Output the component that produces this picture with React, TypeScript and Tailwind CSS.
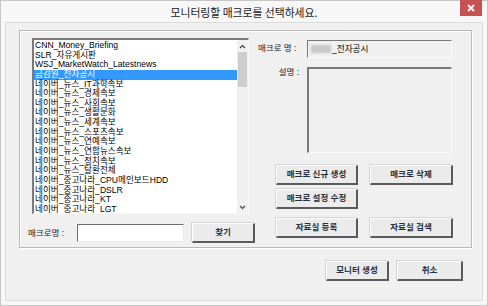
import React from "react";

const items = [
  "CNN_Money_Briefing",
  "SLR_자유게시판",
  "WSJ_MarketWatch_Latestnews",
  "금감원_전자공시",
  "네이버_뉴스_IT과학속보",
  "네이버_뉴스_경제속보",
  "네이버_뉴스_사회속보",
  "네이버_뉴스_생활문화",
  "네이버_뉴스_세계속보",
  "네이버_뉴스_스포츠속보",
  "네이버_뉴스_연예속보",
  "네이버_뉴스_연합뉴스속보",
  "네이버_뉴스_정치속보",
  "네이버_뉴스_탈환전체",
  "네이버_중고나라_CPU메인보드HDD",
  "네이버_중고나라_DSLR",
  "네이버_중고나라_KT",
  "네이버_중고나라_LGT",
];

function Btn({ label, w, h = 20 }: { label: string; w: number; h?: number }) {
  return (
    <div
      className="flex items-center justify-center bg-[#ebebeb] border-t border-l border-t-[#fdfdfd] border-l-[#fdfdfd] border-b-2 border-r-2 border-b-[#5a5a5a] border-r-[#5a5a5a] shadow-[-1px_-1px_0_#d4d4d4] text-[8.5px] font-bold text-[#22303f]"
      style={{ width: w, height: h }}
    >
      {label}
    </div>
  );
}

export default function App() {
  const font = { fontFamily: '"Liberation Sans", "Noto Sans CJK KR", sans-serif' };
  return (
    <div className="w-[488px] h-[306px] bg-[#f7f7f7] border border-[#c6c6c6] flex flex-col" style={font}>
      {/* title bar */}
      <div className="relative h-[21px] flex items-center justify-center">
        <span className="text-[10.8px] text-[#1a1a1a] mt-[2px]" style={{ fontFamily: '"Noto Sans CJK KR", sans-serif' }}>
          모니터링할 매크로를 선택하세요.
        </span>
        <div className="absolute right-[5px] top-[-1px] w-[22px] h-[16px] bg-[#c75050] flex items-center justify-center">
          <svg width="8" height="8" viewBox="0 0 8 8">
            <path d="M1 1 L7 7 M7 1 L1 7" stroke="#fff" strokeWidth="1.8" />
          </svg>
        </div>
      </div>
      {/* client area */}
      <div className="mx-[4px] h-[279px] bg-[#f0f0f0] border border-[#dcdcdc] flex flex-col">
        {/* group box */}
        <div className="ml-[13px] mt-[7px] w-[453px] h-[218px] border border-[#b9b9b9] shadow-[inset_1px_1px_0_#fff,1px_1px_0_#fff] flex">
          {/* left column */}
          <div className="ml-[8px] mt-[7px] w-[227px] flex flex-col">
            <div className="ml-[4px] w-[217px] h-[176px] bg-white border-t-2 border-l-2 border-t-[#7a7a7a] border-l-[#7a7a7a] border-b border-r border-b-[#f8f8f8] border-r-[#f8f8f8] flex">
              <div className="flex-1 pt-[1px] overflow-hidden">
                {items.map((t, i) => (
                  <div
                    key={t}
                    className={
                      "h-[9.65px] leading-[9.65px] text-[8.6px] pl-[1px] whitespace-nowrap " +
                      (i === 3 ? "bg-[#3399ff] text-white" : "text-black")
                    }
                  >
                    {t}
                  </div>
                ))}
              </div>
              <div className="w-[11px] bg-[#f0f0f0] flex flex-col items-center">
                <div className="h-[12px] flex items-center justify-center">
                  <svg width="7" height="5" viewBox="0 0 7 5">
                    <path d="M1 4 L3.5 1.5 L6 4" stroke="#444" strokeWidth="1.2" fill="none" />
                  </svg>
                </div>
                <div className="w-[9px] h-[35px] bg-[#cdcdcd]" />
                <div className="flex-1" />
                <div className="h-[12px] flex items-center justify-center">
                  <svg width="7" height="5" viewBox="0 0 7 5">
                    <path d="M1 1 L3.5 3.5 L6 1" stroke="#444" strokeWidth="1.2" fill="none" />
                  </svg>
                </div>
              </div>
            </div>
            <div className="mt-[9px] flex items-start">
              <div className="w-[49px] h-[20px] flex items-center text-[8.5px] text-[#1a1a1a]">매크로명 :</div>
              <div className="mt-[1px] w-[107px] h-[18px] bg-white border-t border-l border-t-[#6e6e6e] border-l-[#6e6e6e] border-b border-r border-b-[#e8e8e8] border-r-[#e8e8e8]" />
              <div className="ml-[8px]">
                <Btn label="찾기" w={63} />
              </div>
            </div>
          </div>
          {/* right column */}
          <div className="ml-[3px] mt-[9px] flex flex-col">
            <div className="flex items-start">
              <div className="w-[49px] h-[17px] flex items-center text-[8.5px] text-[#1a1a1a]">매크로 명 :</div>
              <div className="w-[145px] h-[18px] bg-[#f0f0f0] border-t border-l border-t-[#7a7a7a] border-l-[#7a7a7a] border-b border-r border-b-[#fafafa] border-r-[#fafafa] flex items-center text-[8.6px] text-black pl-[3px]">
                <span className="inline-block w-[20px] h-[8px] bg-[#c8c8c8] blur-[1px] mr-[1px]" />
                <span>_전자공시</span>
              </div>
            </div>
            <div className="flex items-start mt-[9px]">
              <div className="w-[49px] h-[10px] flex items-center justify-end pr-[8px] text-[8.5px] text-[#1a1a1a]">설명 :</div>
              <div className="w-[145px] h-[86px] bg-[#f0f0f0] border-t-2 border-l-2 border-t-[#7a7a7a] border-l-[#7a7a7a] border-b border-r border-b-[#fafafa] border-r-[#fafafa]" />
            </div>
            <div className="ml-[18px] mt-[12px] flex flex-col">
              <div className="flex gap-[12px]">
                <Btn label="매크로 신규 생성" w={82} h={20} />
                <Btn label="매크로 삭제" w={83} h={20} />
              </div>
              <div className="mt-[4px] flex">
                <Btn label="매크로 설정 수정" w={82} h={20} />
              </div>
              <div className="mt-[9px] flex gap-[12px]">
                <Btn label="자료실 등록" w={82} h={20} />
                <Btn label="자료실 검색" w={83} h={20} />
              </div>
            </div>
          </div>
        </div>
        {/* bottom buttons */}
        <div className="mt-[13px] flex justify-end pr-[19px] gap-[8px]">
          <Btn label="모니터 생성" w={63} h={20} />
          <Btn label="취소" w={66} h={20} />
        </div>
      </div>
    </div>
  );
}
